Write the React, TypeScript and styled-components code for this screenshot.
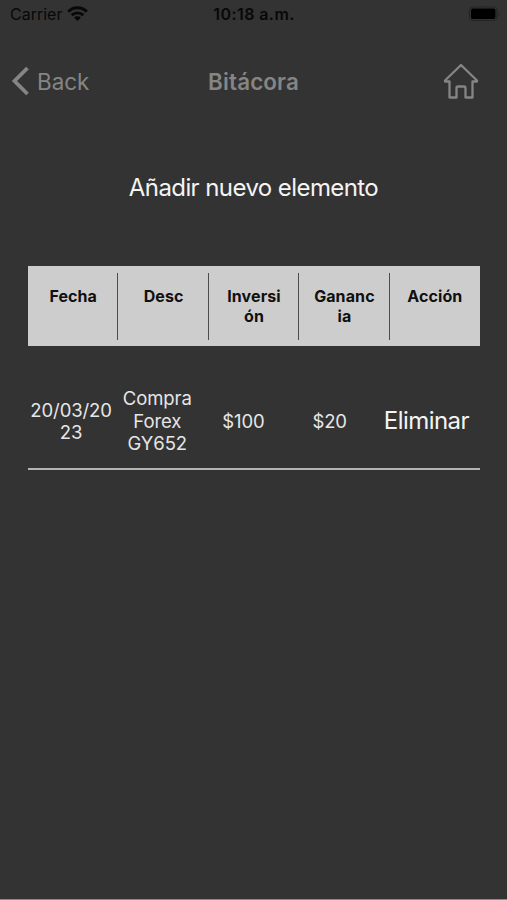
import React from "react";
import styled, { createGlobalStyle } from "styled-components";

const GlobalStyle = createGlobalStyle`
  * { box-sizing: border-box; }
  body { margin: 0; background: #333333; }
`;

const Screen = styled.div`
  display: flex;
  flex-direction: column;
  width: 507px;
  height: 900px;
  background: #333333;
  border-bottom: 1px solid #8c8a8a;
  font-family: Inter, "Liberation Sans", sans-serif;
  overflow: hidden;
`;

const StatusBar = styled.div`
  display: grid;
  grid-template-columns: 1fr auto 1fr;
  align-items: center;
  height: 28px;
  padding: 0 6px 0 10px;
  color: #080808;
`;

const Carrier = styled.div`
  display: flex;
  align-items: center;
  gap: 5px;
  font-size: 16px;
`;

const Clock = styled.div`
  margin-right: 3px;
  font-size: 16px;
  font-weight: 600;
  letter-spacing: 0.42px;
`;

const Battery = styled.svg`
  justify-self: end;
`;

const NavBar = styled.header`
  display: grid;
  grid-template-columns: 1fr auto 1fr;
  align-items: center;
  height: 106px;
  padding: 0 11px;
  color: #858585;
`;

const BackButton = styled.button`
  display: flex;
  align-items: center;
  gap: 7px;
  padding: 0;
  border: 0;
  background: none;
  color: inherit;
  font: 400 22.4px Inter, sans-serif;
`;

const Title = styled.h1`
  margin: 0;
  font-size: 22.4px;
  font-weight: 600;
  letter-spacing: 0.15px;
`;

const HomeButton = styled.button`
  display: flex;
  justify-self: end;
  margin-right: 17px;
  padding: 0;
  border: 0;
  background: none;
  color: inherit;
`;

const AddButton = styled.button`
  align-self: center;
  height: 30px;
  margin-top: 39px;
  padding: 0;
  border: 0;
  background: none;
  color: #f4f4f4;
  font: 400 24px/30px Inter, sans-serif;
  letter-spacing: -0.58px;
  white-space: nowrap;
`;

const Table = styled.section`
  width: 452px;
  margin: 63px 0 0 28px;
`;

const HeaderRow = styled.div`
  display: grid;
  grid-template-columns: repeat(5, 1fr);
  height: 80px;
  padding: 7px 0 6px;
  background: #cdcdcd;
`;

const HeaderCell = styled.div<{ $last?: boolean }>`
  display: flex;
  justify-content: center;
  padding-top: 14px;
  padding-left: ${(p) => (p.$last ? "0" : "1px")};
  border-right: ${(p) => (p.$last ? "0" : "1px solid #4c4c4c")};
  color: #101010;
  font-size: 16px;
  font-weight: 700;
  line-height: 19.5px;
  letter-spacing: 0.1px;
  text-align: center;
  white-space: pre;
`;

const DataRow = styled.div`
  display: grid;
  grid-template-columns: repeat(4, 86.2px) 1fr;
  align-items: center;
  height: 124px;
  padding-top: 28px;
  border-bottom: 2px solid #b4b4b4;
`;

const DataCell = styled.div`
  color: #e6e6e6;
  font-size: 18.5px;
  line-height: 22.5px;
  letter-spacing: -0.1px;
  text-align: center;
  white-space: pre;
`;

const DeleteButton = styled.button`
  padding: 0;
  border: 0;
  background: none;
  color: #f4f4f4;
  font: 400 24px/30px Inter, sans-serif;
  letter-spacing: -0.55px;
`;

const headers = ["Fecha", "Desc", "Inversi\nón", "Gananc\nia", "Acción"];
const cells = ["20/03/20\n23", "Compra\nForex\nGY652", "$100", "$20"];

export default function App() {
  return (
    <>
      <GlobalStyle />
      <Screen>
        <StatusBar>
          <Carrier>
            <span>Carrier</span>
            <svg width="21" height="16" viewBox="0 0 21 16" fill="none" stroke="currentColor" strokeWidth="2.9">
              <path d="M1.2 5.6C6.3.5 14.7.5 19.8 5.6" />
              <path d="M4.7 9.2C8 6.1 13 6.1 16.3 9.2" />
              <path d="M7.1 11.6C9 9.8 12 9.8 13.9 11.6L10.5 15Z" fill="currentColor" stroke="none" />
            </svg>
          </Carrier>
          <Clock>10:18 a.m.</Clock>
          <Battery width="33" height="16" viewBox="0 0 33 16">
            <rect x="1.5" y="1" width="27.5" height="13.5" rx="4" fill="none" stroke="#242424" strokeWidth="1.2" />
            <rect x="3" y="2.4" width="24.4" height="10.6" rx="2" fill="#000" />
            <path d="M30.5 5.4Q32.4 7.7 30.5 10Z" fill="#242424" />
          </Battery>
        </StatusBar>
        <NavBar>
          <BackButton>
            <svg width="19" height="30" viewBox="0 0 19 30" fill="none" stroke="currentColor" strokeWidth="3.8">
              <path d="M16.5 2L3.5 15L16.5 28" />
            </svg>
            <span>Back</span>
          </BackButton>
          <Title>Bitácora</Title>
          <HomeButton aria-label="Inicio">
            <svg width="36" height="36" viewBox="0 0 36 36" fill="none" stroke="currentColor" strokeWidth="2.3" strokeLinejoin="round">
              <path d="M18 2L2 17.5V18.5H6.5V34.5H13.5V25Q13.5 23.5 15 23.5H21Q22.5 23.5 22.5 25V34.5H29.5V18.5H34V17.5Z" />
            </svg>
          </HomeButton>
        </NavBar>
        <AddButton>Añadir nuevo elemento</AddButton>
        <Table>
          <HeaderRow>
            {headers.map((label, i) => (
              <HeaderCell key={label} $last={i === headers.length - 1}>
                {label}
              </HeaderCell>
            ))}
          </HeaderRow>
          <DataRow>
            {cells.map((value) => (
              <DataCell key={value}>{value}</DataCell>
            ))}
            <DeleteButton>Eliminar</DeleteButton>
          </DataRow>
        </Table>
      </Screen>
    </>
  );
}
